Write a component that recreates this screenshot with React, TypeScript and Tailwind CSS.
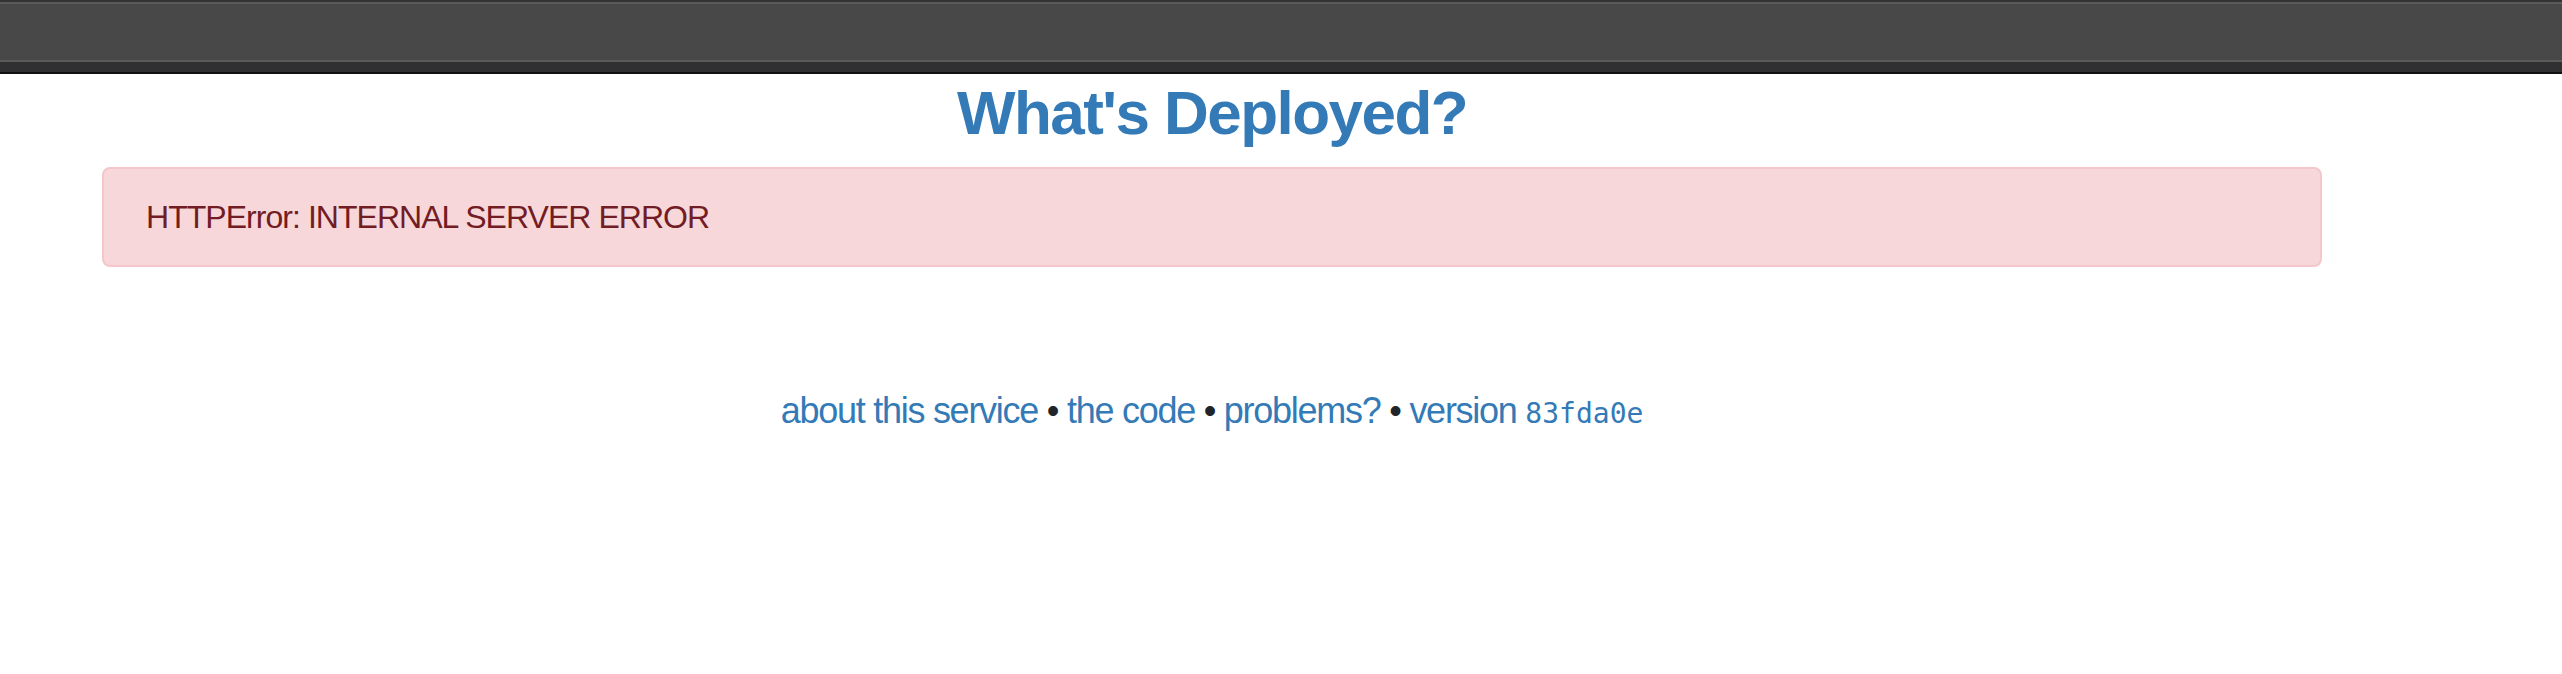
export default function App() {
  return (
    <div className="min-h-screen bg-white" style={{ fontFamily: "'Liberation Sans', Arial, sans-serif" }}>
      {/* window chrome strip */}
      <div className="flex flex-col">
        <div className="h-[2px] bg-[#333335]"></div>
        <div className="h-[2px] bg-[#5a5a5a]"></div>
        <div className="h-[56px] bg-[#484848]"></div>
        <div className="h-[2px] bg-[#5a5a5a]"></div>
        <div className="h-[10px] bg-[#303032]"></div>
        <div className="h-[2px] bg-[#111111]"></div>
      </div>

      <div className="w-[2424px]">
        <h1 className="mt-[8px] text-center text-[62px] leading-none font-bold tracking-tight text-[#337ab7]">
          What's Deployed?
        </h1>

        <div className="mx-[102px] mt-[23px] rounded-[8px] border-2 border-[#f5c6cb] bg-[#f8d7da] px-[42px] py-[24px] text-[32px] leading-[48px] tracking-[-0.03em] text-[#721c24]">
          HTTPError: INTERNAL SERVER ERROR
        </div>

        <p className="mt-[117px] text-center text-[36px] leading-[54px] tracking-[-0.035em] text-[#212529]">
          <a href="#" className="text-[#337ab7]">about this service</a>
          {" • "}
          <a href="#" className="text-[#337ab7]">the code</a>
          {" • "}
          <a href="#" className="text-[#337ab7]">problems?</a>
          {" • "}
          <a href="#" className="text-[#337ab7]">
            version{" "}
            <code className="text-[28px] tracking-normal" style={{ fontFamily: "'DejaVu Sans Mono', monospace" }}>
              83fda0e
            </code>
          </a>
        </p>
      </div>
    </div>
  )
}
